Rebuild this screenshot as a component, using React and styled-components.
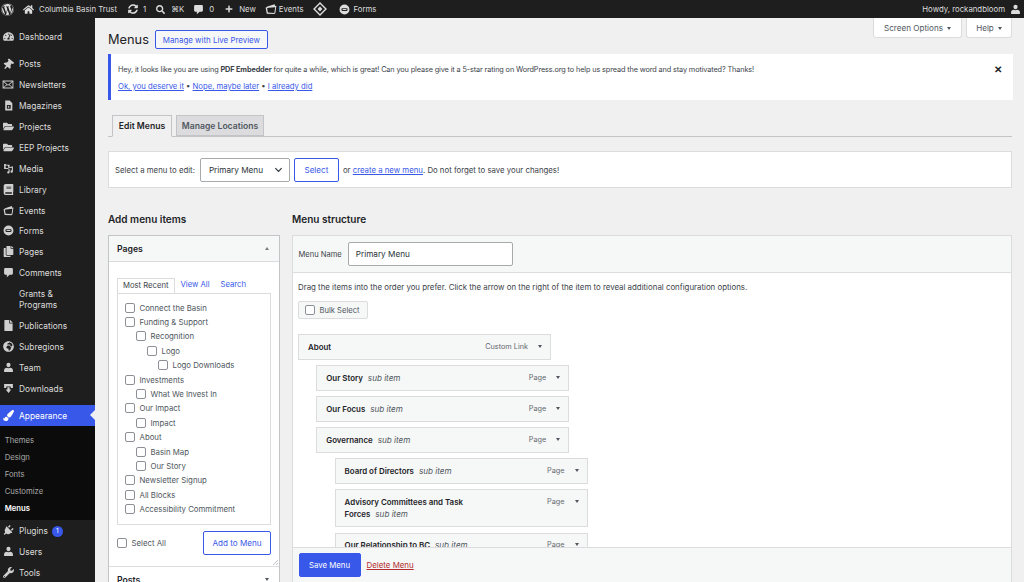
import React from "react";
import styled, { createGlobalStyle } from "styled-components";
import {
  FaWordpress, FaHome, FaSyncAlt, FaSearch, FaPlus, FaTachometerAlt, FaThumbtack,
  FaFolderOpen, FaBook, FaCopy, FaGlobeAfrica, FaPaintBrush, FaPlug, FaWrench, FaFile,
} from "react-icons/fa";

const GlobalStyle = createGlobalStyle`
  html, body { margin: 0; padding: 0; height: 582px; overflow: hidden; background: #f0f0f0; }
  body { font-family: Inter, "Liberation Sans", sans-serif; font-size: 8.7px; color: #3c434a; }
  * { box-sizing: border-box; }
`;

const Page = styled.div`display: flex; flex-direction: column; width: 1024px; height: 582px; overflow: hidden;`;
const AdminBar = styled.header`
  display: flex; align-items: center; height: 18px; flex: none; background: #1e1e1e; color: #dcdcdc;
  padding: 0 3px 0 1px; font-size: 7.8px; line-height: 18px;
`;
const BarItem = styled.div`display: flex; align-items: center; gap: ${p => p.$gap ?? 4}px; margin-right: ${p => p.$mr ?? 8}px; white-space: nowrap;
  svg { display: block; flex: none; color: #dcdcdc; }`;
const BarSpacer = styled.div`flex: 1;`;
const Body = styled.div`display: flex; flex: 1; min-height: 0;`;
const Sidebar = styled.nav`width: 95px; flex: none; background: #1e1e1e; color: #dcdcdc; padding-top: 8px; overflow: hidden;`;
const NavRow = styled.div`
  position: relative; display: flex; align-items: center; padding: 5.9px 0 4px 19px;
  margin-top: ${p => p.$gap ? 6.5 : 0}px; line-height: 11px; font-size: 8.4px;
  background: ${p => p.$active ? "#3858e9" : "transparent"}; color: ${p => p.$active ? "#fff" : "#dcdcdc"};
`;
const NavIcon = styled.span`position: absolute; left: 2px; top: 50%; transform: translateY(-50%) rotate(${p => p.$rot ?? 0}deg); width: 12px; height: 12px; display: flex; align-items: center; justify-content: center;
  svg { display: block; color: ${p => p.$active ? "#fff" : "#cfcfcf"}; }`;
const NavArrow = styled.span`position: absolute; right: 0; top: 5px; border: 5px solid transparent; border-right-color: #f0f0f0; border-left-width: 0;`;
const Badge = styled.span`margin-left: 4px; width: 11px; height: 11px; border-radius: 50%; background: #3858e9; color: #fff; font-size: 6.5px; line-height: 11px; text-align: center;`;
const SubMenu = styled.div`background: #0b0b0b; padding: 5.5px 0 3px;`;
const SubRow = styled.div`height: 17.1px; line-height: 17.1px; padding-left: 4.7px; font-size: 7.7px; color: ${p => p.$current ? "#fff" : "#a9a9a9"}; font-weight: ${p => p.$current ? 600 : 400};`;

const Main = styled.main`flex: 1; min-width: 0; padding: 0 11px 0 13px; display: flex; flex-direction: column; overflow: hidden;`;
const HeadRow = styled.div`display: flex; justify-content: space-between; height: 36px; flex: none; padding-right: 1px;`;
const TitleGroup = styled.div`display: flex; align-items: center; gap: 6px; height: 19px; margin-top: 12px;`;
const Title = styled.h1`margin: 0; font-size: 12.8px; font-weight: 400; color: #1d2327; line-height: 19px;`;
const OutlineButton = styled.button`
  font: inherit; font-size: ${p => p.$fs ?? 7.9}px; color: #3858e9; background: ${p => p.$white ? "#fff" : "#f6f7f7"}; border: 1px solid #3858e9; border-radius: 2px;
  height: ${p => p.$h ?? 19}px; width: ${p => p.$w}px; padding: 0; flex: none;
`;
const PickButton = styled(OutlineButton)`margin: 0 4px;`;
const MetaTabs = styled.div`display: flex; gap: 4px;`;
const MetaTab = styled.div`height: 20px; width: ${p => p.$w}px; background: #fff; border: 1px solid #dcdcde; border-top: 0; border-radius: 0 0 3px 3px; font-size: 8.1px; line-height: 20px; text-align: center; color: #50575e;`;
const Tri = styled.i`display: inline-block; vertical-align: middle; margin-left: ${p => p.$ml ?? 4}px; border: ${p => p.$s ?? 2.5}px solid transparent; border-top: ${p => (p.$s ?? 2.5) * 1.3}px solid #50575e; border-bottom: 0;`;
const Notice = styled.section`flex: none; height: 46px; background: #fff; border-left: 3px solid #3858e9; padding: 10px 13px 0 7px; position: relative; line-height: 12px; color: #3c434a;`;
const NoticeText = styled.p`margin: 0 0 5px; font-size: 7.3px; letter-spacing: -0.115px;`;
const NoticeLinks = styled.p`margin: 0; font-size: 7.7px;`;
const Close = styled.span`position: absolute; right: 9px; top: 9px; width: 12px; height: 12px; color: #1d2327; font-size: 10px; line-height: 12px; text-align: center; font-weight: 700;`;
const A = styled.span`color: #3858e9; text-decoration: underline;`;
const TabBar = styled.div`flex: none; margin: 15px 1px 0 0; height: 22px; display: flex; gap: 4px; padding-left: 4px; border-bottom: 1px solid #c3c4c7;`;
const Tab = styled.div`width: ${p => p.$w}px; height: ${p => p.$on ? 22 : 21}px; border: 1px solid #c3c4c7; ${p => p.$on && "border-bottom-color: #f0f0f0;"} background: ${p => p.$on ? "#f0f0f0" : "#dcdcde"}; color: ${p => p.$on ? "#1d2327" : "#50575e"}; font-weight: 600; font-size: 8.6px; line-height: 21px; text-align: center;`;
const PickerBar = styled.div`flex: none; margin: 14px 1px 0 0; height: 37px; background: #fff; border: 1px solid #dcdcde; display: flex; align-items: center; padding-left: 6px; font-size: 7.8px;`;
const FakeSelect = styled.div`margin-left: 5px; width: 90px; height: 24px; background: #fff; border: 1px solid #a7aaad; border-radius: 2px; display: flex; align-items: center; justify-content: space-between; padding: 0 6px 0 8px; color: #2c3338; font-size: 8.2px;
  svg { display: block; }`;
const Columns = styled.div`flex: 1; min-height: 0; display: flex; gap: 12px; margin-top: 24px; padding-right: 1px;`;
const LeftCol = styled.div`width: 172px; flex: none; overflow: hidden;`;
const RightCol = styled.div`flex: 1; min-width: 0; display: flex; flex-direction: column; overflow: hidden;`;
const SectionTitle = styled.h2`margin: 0; height: 23px; font-size: 10px; line-height: 14px; font-weight: 600; color: #1d2327; flex: none;`;
const Panel = styled.div`background: #fff; border: 1px solid #c3c4c7; border-bottom: 0;`;
const PanelHead = styled.div`height: 26px; background: #f6f7f7; border-bottom: 1px solid #dcdcde; display: flex; align-items: center; justify-content: space-between; padding: 0 10px 0 8px; font-weight: 600; font-size: 8.7px; color: #1d2327;`;
const PostsHead = styled(PanelHead)`background: #fff; border-bottom: 0; border-top: 1px solid #dcdcde;`;
const UpTri = styled.i`border: 2.5px solid transparent; border-bottom: 3px solid #787c82; border-top: 0;`;
const PanelBody = styled.div`position: relative; padding: 15.5px 8px 11px;`;
const Grip = styled.svg`position: absolute; right: 1px; bottom: 1px; color: #a7aaad;`;
const SmallTabs = styled.div`display: flex; align-items: flex-end; height: 15px; font-size: 7.7px;`;
const SmallTab = styled.div`height: 15px; line-height: 14px; padding: 0 ${p => p.$on ? 5 : 0}px; margin-left: ${p => p.$ml ?? 0}px; color: ${p => p.$on ? "#3c434a" : "#3858e9"}; ${p => p.$on && "background:#fff;border:1px solid #dcdcde;border-bottom:0;"}`;
const ListBox = styled.div`border: 1px solid #dcdcde; padding: 7px 0 0 7px; height: 232.5px;`;
const CheckRow = styled.div`display: flex; align-items: center; gap: 4.5px; height: 14.4px; padding-left: ${p => p.$level * 11}px; font-size: 7.8px; color: #50575e; white-space: nowrap;`;
const Box = styled.span`width: 10px; height: 10px; flex: none; background: #fff; border: 1px solid #8c8f94; border-radius: 2px;`;
const PanelActions = styled.div`display: flex; align-items: center; justify-content: space-between; margin-top: 6px;`;
const SelectAll = styled.div`display: flex; align-items: center; gap: 4.5px; font-size: 7.8px; color: #50575e;`;
const StructurePanel = styled.div`flex: 1; min-height: 0; background: #fff; border: 1px solid #dcdcde; border-bottom: 0; display: flex; flex-direction: column;`;
const NameRow = styled.div`flex: none; height: 37px; background: #f6f7f7; border-bottom: 1px solid #dcdcde; display: flex; align-items: center; padding-left: 5.5px; font-size: 7.55px;`;
const NameInput = styled.div`margin-left: 6px; width: 165px; height: 24px; background: #fff; border: 1px solid #a7aaad; border-radius: 2px; padding-left: 7px; line-height: 22px; color: #2c3338; font-size: 8.2px;`;
const StructureBody = styled.div`flex: 1; min-height: 0; overflow: hidden; padding: 7px 5px 0;`;
const Instructions = styled.p`margin: 0; height: 14px; line-height: 14px; font-size: 7.86px;`;
const BulkButton = styled.div`margin-top: 7px; width: 69.5px; height: 18px; background: #f6f7f7; border: 1px solid #dcdcde; border-radius: 2px; display: flex; align-items: center; gap: 4.5px; padding-left: 6px; font-size: 7.6px; color: #50575e;`;
const Items = styled.div`margin-top: 15.4px; display: flex; flex-direction: column; gap: 5.7px;`;
const Item = styled.div`margin-left: ${p => p.$depth * 18.3}px; width: 253px; flex: none; background: #f6f7f7; border: 1px solid #dcdcde; display: flex; justify-content: space-between; padding: 5.5px 8px 5.5px 9px; line-height: 12.3px;`;
const ItemName = styled.div`width: 165px; font-weight: 600; font-size: 7.9px; color: #1d2327;
  em { font-weight: 400; font-size: 8.1px; color: #50575e; margin-left: 5px; white-space: nowrap; }`;
const ItemMeta = styled.div`display: flex; align-items: flex-start; font-size: 7.3px; color: #646970; white-space: nowrap;`;
const ItemTri = styled(Tri)`margin: 4px 0 0 10px; border-top-color: #50575e; border-width: 3px 2.5px 0;`;
const Footer = styled.div`flex: none; height: 35px; background: #f6f7f7; border-top: 1px solid #dcdcde; display: flex; align-items: center; gap: 6px; padding-left: 5.5px;`;
const PrimaryButton = styled.button`font: inherit; font-size: 7.8px; width: 62px; height: 24px; padding: 0; background: #3858e9; color: #fff; border: 1px solid #3858e9; border-radius: 2px;`;
const DeleteLink = styled.span`color: #b32d2e; text-decoration: underline; font-size: 7.9px;`;

const Forms = ({ size = 12 }) => (
  <svg width={size} height={size} viewBox="0 0 20 20"><path fill="currentColor" fillRule="evenodd" d="M10 1a9 9 0 1 1 0 18 9 9 0 0 1 0-18ZM6 7.5A1.5 1.5 0 0 0 4.5 9v2A1.5 1.5 0 0 0 6 12.5h8a1.5 1.5 0 0 0 1.5-1.5V9A1.5 1.5 0 0 0 14 7.5Zm.5 1.5h7v2h-7Z" /></svg>
);
const Events = ({ size = 13 }) => (
  <svg width={size} height={size} viewBox="0 0 20 20"><path fill="currentColor" fillRule="evenodd" d="M4 6 16 2l1 3 2-.3-1.7 12-1.8 1.8-12.500-.5L1 8Zm2 2-2.500.7 1.300 7.300 10.700.5 1.500-9.500Z" /></svg>
);
const Diamond = ({ size = 13 }) => (
  <svg width={size} height={size} viewBox="0 0 20 20"><path fill="none" stroke="currentColor" strokeWidth="2" d="M10 1.500 18.500 10 10 18.500 1.500 10Z" /><path fill="currentColor" d="m10 6.500 3.500 3.500-3.500 3.500L6.500 10Z" /></svg>
);
const Bubble = ({ size = 12 }) => (
  <svg width={size} height={size} viewBox="0 0 20 20"><path fill="currentColor" d="M4 2h12a2 2 0 0 1 2 2v8a2 2 0 0 1-2 2h-4l-5 4.500V14H4a2 2 0 0 1-2-2V4a2 2 0 0 1 2-2Z" /></svg>
);
const Person = ({ size = 12 }) => (
  <svg width={size} height={size} viewBox="0 0 20 20"><path fill="currentColor" d="M10 1.500a3.700 3.700 0 0 1 3.700 4c0 2.200-1.500 4.200-3.700 4.200S6.300 7.700 6.300 5.500a3.700 3.700 0 0 1 3.700-4ZM7 10.500c1 1 5 1 6 0 3 .7 5 1.800 5 4v3.500H2v-3.500c0-2.200 2-3.300 5-4Z" /></svg>
);
const Media = ({ size = 12 }) => (
  <svg width={size} height={size} viewBox="0 0 20 20"><path fill="currentColor" fillRule="evenodd" d="M2 2h3l1 1h6v8H2Zm5 2.500a2.500 2.500 0 1 0 0 5 2.500 2.500 0 0 0 0-5ZM18 6v9.500a2.200 2.200 0 1 1-2-2.200V8.500l-4 1V17a2.200 2.200 0 1 1-2-2.200V8Z" /></svg>
);
const Magazine = ({ size = 12 }) => (
  <svg width={size} height={size} viewBox="0 0 20 20"><path fill="currentColor" fillRule="evenodd" d="M4 1h8l5 5v13H4Zm3 8v7h7V9Zm2 1.500 3.500 2-3.500 2Z" /></svg>
);
const Download = ({ size = 12 }) => (
  <svg width={size} height={size} viewBox="0 0 20 20"><path fill="currentColor" d="M2 2h16v7h-4V6.500H6V9H2ZM8 7.500h4V12h3l-5 6-5-6h3Z" /></svg>
);
const Mail = ({ size = 12 }) => (
  <svg width={size} height={size} viewBox="0 0 20 20"><path fill="currentColor" fillRule="evenodd" d="M1 3.500h18v13H1Zm2.500 1.500L10 10.500 16.500 5ZM2.500 5.700v8.800l5-4.600Zm15 0-5 4.200 5 4.600ZM8.500 10.800 3.500 15h13l-5-4.200-1.500 1.200Z" /></svg>
);
const Chevron = () => (
  <svg width="9" height="9" viewBox="0 0 10 10"><path fill="none" stroke="#2c3338" strokeWidth="1.3" d="m1.500 3.500 3.500 3.500 3.500-3.500" /></svg>
);

const nav = [
  { label: "Dashboard", Icon: FaTachometerAlt },
  { label: "Posts", Icon: FaThumbtack, gap: true, rot: 40 },
  { label: "Newsletters", Icon: Mail },
  { label: "Magazines", Icon: Magazine },
  { label: "Projects", Icon: FaFolderOpen },
  { label: "EEP Projects", Icon: FaFolderOpen },
  { label: "Media", Icon: Media },
  { label: "Library", Icon: FaBook },
  { label: "Events", Icon: Events },
  { label: "Forms", Icon: Forms },
  { label: "Pages", Icon: FaCopy },
  { label: "Comments", Icon: Bubble },
  { label: <>Grants &amp;<br />Programs</> },
  { label: "Publications", Icon: FaFile },
  { label: "Subregions", Icon: FaGlobeAfrica },
  { label: "Team", Icon: Person },
  { label: "Downloads", Icon: Download },
];
const navAfter = [
  { label: "Plugins", Icon: FaPlug, badge: 1, rot: 45 },
  { label: "Users", Icon: Person },
  { label: "Tools", Icon: FaWrench },
];
const sub = ["Themes", "Design", "Fonts", "Customize", "Menus"];
const pages = [
  ["Connect the Basin", 0], ["Funding & Support", 0], ["Recognition", 1], ["Logo", 2], ["Logo Downloads", 3],
  ["Investments", 0], ["What We Invest In", 1], ["Our Impact", 0], ["Impact", 1], ["About", 0], ["Basin Map", 1],
  ["Our Story", 1], ["Newsletter Signup", 0], ["All Blocks", 0], ["Accessibility Commitment", 0],
];
const items = [
  ["About", 0, "Custom Link", false], ["Our Story", 1, "Page", true], ["Our Focus", 1, "Page", true],
  ["Governance", 1, "Page", true], ["Board of Directors", 2, "Page", true],
  ["Advisory Committees and Task Forces", 2, "Page", true], ["Our Relationship to BC", 2, "Page", true],
];

const NavItem = ({ item, active }) => (
  <NavRow $gap={item.gap} $active={active}>
    {item.Icon && <NavIcon $active={active} $rot={item.rot}><item.Icon size={item.Icon === Mail ? 13 : 11} /></NavIcon>}
    {item.label}
    {item.badge && <Badge>{item.badge}</Badge>}
    {active && <NavArrow />}
  </NavRow>
);

export default function App() {
  return (
    <Page>
      <GlobalStyle />
      <AdminBar>
        <BarItem $mr={9}><FaWordpress size={13} /></BarItem>
        <BarItem $gap={5} $mr={11}><FaHome size={11} />Columbia Basin Trust</BarItem>
        <BarItem $gap={5} $mr={10}><FaSyncAlt size={10} />1</BarItem>
        <BarItem $gap={6} $mr={9}><FaSearch size={9} />⌘K</BarItem>
        <BarItem $gap={5} $mr={11}><Bubble size={11} />0</BarItem>
        <BarItem $gap={6} $mr={9}><FaPlus size={8} />New</BarItem>
        <BarItem $gap={2} $mr={9}><Events size={12} />Events</BarItem>
        <BarItem $mr={12}><Diamond size={14} /></BarItem>
        <BarItem $gap={4}><Forms size={11} />Forms</BarItem>
        <BarSpacer />
        <BarItem $gap={5} $mr={0}>Howdy, rockandbloom<Person size={11} /></BarItem>
      </AdminBar>
      <Body>
        <Sidebar>
          {nav.map((n, i) => <NavItem key={i} item={n} />)}
          <NavItem item={{ label: "Appearance", Icon: FaPaintBrush, gap: true }} active />
          <SubMenu>{sub.map(s => <SubRow key={s} $current={s === "Menus"}>{s}</SubRow>)}</SubMenu>
          {navAfter.map((n, i) => <NavItem key={i} item={n} />)}
        </Sidebar>
        <Main>
          <HeadRow>
            <TitleGroup>
              <Title>Menus</Title>
              <OutlineButton $w={113}>Manage with Live Preview</OutlineButton>
            </TitleGroup>
            <MetaTabs>
              <MetaTab $w={89}>Screen Options<Tri /></MetaTab>
              <MetaTab $w={46}>Help<Tri /></MetaTab>
            </MetaTabs>
          </HeadRow>
          <Notice>
            <NoticeText>Hey, it looks like you are using <b>PDF Embedder</b> for quite a while, which is great! Can you please give it a 5-star rating on WordPress.org to help us spread the word and stay motivated? Thanks!</NoticeText>
            <NoticeLinks><A>Ok, you deserve it</A> • <A>Nope, maybe later</A> • <A>I already did</A></NoticeLinks>
            <Close>✕</Close>
          </Notice>
          <TabBar>
            <Tab $on $w={60}>Edit Menus</Tab>
            <Tab $w={88}>Manage Locations</Tab>
          </TabBar>
          <PickerBar>
            Select a menu to edit:
            <FakeSelect>Primary Menu<Chevron /></FakeSelect>
            <PickButton $w={45} $h={24} $white $fs={8.1}>Select</PickButton>
            or&nbsp;<A>create a new menu</A>. Do not forget to save your changes!
          </PickerBar>
          <Columns>
            <LeftCol>
              <SectionTitle>Add menu items</SectionTitle>
              <Panel>
                <PanelHead>Pages<UpTri /></PanelHead>
                <PanelBody>
                  <SmallTabs>
                    <SmallTab $on>Most Recent</SmallTab>
                    <SmallTab $ml={6}>View All</SmallTab>
                    <SmallTab $ml={11}>Search</SmallTab>
                  </SmallTabs>
                  <ListBox>
                    {pages.map(([t, l]) => <CheckRow key={t} $level={l}><Box />{t}</CheckRow>)}
                  </ListBox>
                  <PanelActions>
                    <SelectAll><Box />Select All</SelectAll>
                    <OutlineButton $w={68} $h={24} $white $fs={8.1}>Add to Menu</OutlineButton>
                  </PanelActions>
                  <Grip width="5" height="5" viewBox="0 0 5 5"><path stroke="currentColor" strokeWidth=".7" d="M0 5 5 0M3 5l2-2" /></Grip>
                </PanelBody>
                <PostsHead>Posts<Tri $ml={0} /></PostsHead>
              </Panel>
            </LeftCol>
            <RightCol>
              <SectionTitle>Menu structure</SectionTitle>
              <StructurePanel>
                <NameRow>Menu Name<NameInput>Primary Menu</NameInput></NameRow>
                <StructureBody>
                  <Instructions>Drag the items into the order you prefer. Click the arrow on the right of the item to reveal additional configuration options.</Instructions>
                  <BulkButton><Box />Bulk Select</BulkButton>
                  <Items>
                    {items.map(([t, d, m, s]) => (
                      <Item key={t} $depth={d}>
                        <ItemName>{t}{s && <em>sub item</em>}</ItemName>
                        <ItemMeta>{m}<ItemTri /></ItemMeta>
                      </Item>
                    ))}
                  </Items>
                </StructureBody>
                <Footer>
                  <PrimaryButton>Save Menu</PrimaryButton>
                  <DeleteLink>Delete Menu</DeleteLink>
                </Footer>
              </StructurePanel>
            </RightCol>
          </Columns>
        </Main>
      </Body>
    </Page>
  );
}
